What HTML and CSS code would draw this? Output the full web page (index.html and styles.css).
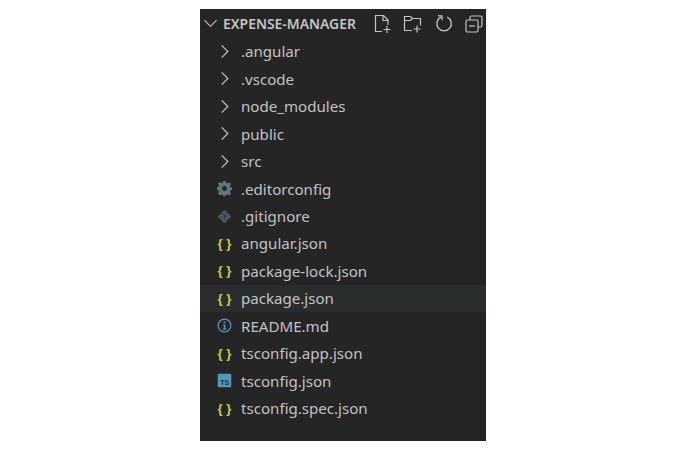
FILE: index.html
```html
<!DOCTYPE html>
<html lang="en">
<head>
<meta charset="utf-8">
<title>Explorer</title>
<link rel="stylesheet" href="styles.css">
</head>
<body>
<main class="panel">
  <header class="head">
    <svg class="head-chev" viewBox="0 0 16 16"><path d="M1.500 4.500 8 11l6.500-6.500" fill="none" stroke="currentColor" stroke-width="1.200"/></svg>
    <h1 class="title">EXPENSE-MANAGER</h1>
    <div class="actions">
      <svg class="act" viewBox="0 0 20 20" fill="none" stroke="currentColor" stroke-width="1.200"><path d="M9 17.500H2.500V1.500h8l4.500 4.500v5"/><path d="M10 1.500v5h5"/><path d="M14 12v7M10.500 15.500h7"/></svg>
      <svg class="act" viewBox="0 0 20 20" fill="none" stroke="currentColor" stroke-width="1.200"><path d="M9 16.500H1.500V2.500h6l2 2h8v7"/><path d="M1.500 6.500h6l2-2"/><path d="M14 11.500v7M10.500 15h7"/></svg>
      <svg class="act" viewBox="0 0 20 20" fill="none" stroke="currentColor" stroke-width="1.300"><path d="M7 3.200a7.200 7.200 0 1 0 6.200 0"/><path d="M4 2h4v4.200" transform="translate(0 -.2)"/></svg>
      <svg class="act" viewBox="0 0 20 20" fill="none" stroke="currentColor" stroke-width="1.200"><rect x="2" y="6" width="12" height="12" rx="1.500"/><path d="M6 6V3.500A1.500 1.500 0 0 1 7.500 2h9A1.500 1.500 0 0 1 18 3.500v8a1.500 1.500 0 0 1-1.500 1.500H14"/><path d="M5 12h6"/></svg>
    </div>
  </header>
  <ul class="tree">
    <li class="row"><svg class="ico chev" viewBox="0 0 16 16"><path d="M5 1.500 11.500 8 5 14.500" fill="none" stroke="currentColor" stroke-width="1.300"/></svg><span>.angular</span></li>
    <li class="row"><svg class="ico chev" viewBox="0 0 16 16"><path d="M5 1.500 11.500 8 5 14.500" fill="none" stroke="currentColor" stroke-width="1.300"/></svg><span>.vscode</span></li>
    <li class="row"><svg class="ico chev" viewBox="0 0 16 16"><path d="M5 1.500 11.500 8 5 14.500" fill="none" stroke="currentColor" stroke-width="1.300"/></svg><span>node_modules</span></li>
    <li class="row"><svg class="ico chev" viewBox="0 0 16 16"><path d="M5 1.500 11.500 8 5 14.500" fill="none" stroke="currentColor" stroke-width="1.300"/></svg><span>public</span></li>
    <li class="row"><svg class="ico chev" viewBox="0 0 16 16"><path d="M5 1.500 11.500 8 5 14.500" fill="none" stroke="currentColor" stroke-width="1.300"/></svg><span>src</span></li>
    <li class="row">
      <svg class="ico" viewBox="0 0 16 16"><path fill="#5f7780" d="M6.600 0h2.800l.4 2.200 1.300.5 1.900-1.300 2 2-1.300 1.900.5 1.300 2.200.4v2.800l-2.200.4-.5 1.300 1.300 1.900-2 2-1.900-1.300-1.300.5-.4 2.200H6.600l-.4-2.200-1.300-.5L3 15.400l-2-2 1.300-1.900-.5-1.300L-.4 9.400V6.600l2.200-.4.500-1.300L1 3l2-2 1.900 1.300 1.300-.5z"/><circle cx="8" cy="8" r="2.600" fill="#252526"/></svg>
      <span>.editorconfig</span>
    </li>
    <li class="row">
      <svg class="ico" viewBox="0 0 16 16"><path fill="#46595f" d="M8 .8 15.200 8 8 15.200 .8 8z"/><path fill="#252526" d="M6.300 4.600h1.300v1.300H6.300zM8.400 6.800h1.300v1.300H8.400zM7.400 6.200h.6v5h-.6z"/></svg>
      <span>.gitignore</span>
    </li>
    <li class="row"><svg class="ico" viewBox="0 0 16 16"><text x="8" y="13" text-anchor="middle" class="json-text">{ }</text></svg><span>angular.json</span></li>
    <li class="row"><svg class="ico" viewBox="0 0 16 16"><text x="8" y="13" text-anchor="middle" class="json-text">{ }</text></svg><span>package-lock.json</span></li>
    <li class="row row-hover"><svg class="ico" viewBox="0 0 16 16"><text x="8" y="13" text-anchor="middle" class="json-text">{ }</text></svg><span>package.json</span></li>
    <li class="row">
      <svg class="ico" viewBox="0 0 16 16"><circle cx="8" cy="8" r="6.800" fill="none" stroke="#519aba" stroke-width="1.300"/><path fill="#519aba" d="M7 3.600h2v1.900H7zM6.300 6.800h2.600v4.400h1v1.200H6.200v-1.200h1.100V8h-1z"/></svg>
      <span>README.md</span>
    </li>
    <li class="row"><svg class="ico" viewBox="0 0 16 16"><text x="8" y="13" text-anchor="middle" class="json-text">{ }</text></svg><span>tsconfig.app.json</span></li>
    <li class="row">
      <svg class="ico" viewBox="0 0 16 16"><rect x=".8" y=".8" width="14.400" height="14.400" rx="1" fill="#519aba"/><text x="8.200" y="13.200" text-anchor="middle" class="ts-text">TS</text></svg>
      <span>tsconfig.json</span>
    </li>
    <li class="row"><svg class="ico" viewBox="0 0 16 16"><text x="8" y="13" text-anchor="middle" class="json-text">{ }</text></svg><span>tsconfig.spec.json</span></li>
  </ul>
</main>
</body>
</html>
```
FILE: styles.css
```css
html, body {
  margin: 0;
  padding: 0;
  background: #ffffff;
}
body {
  width: 700px;
  height: 450px;
  overflow: hidden;
  display: flex;
  justify-content: flex-start;
  padding: 9px 0 0 200px;
  box-sizing: border-box;
  font-family: "Noto Sans", "Open Sans", sans-serif;
}
.panel {
  width: 286px;
  height: 432px;
  background: #252526;
  color: #c2c2c2;
}
.head {
  height: 28.600px;
  display: flex;
  align-items: center;
  padding: 1px 2px 0 3px;
  box-sizing: border-box;
  color: #c4c4c4;
}
.head-chev {
  width: 15px;
  height: 15px;
  flex: none;
  margin-right: 5px;
}
.title {
  margin: 0;
  font-size: 13.900px;
  font-weight: 600;
  white-space: nowrap;
}
.actions {
  margin-left: auto;
  display: flex;
  gap: 10.300px;
  align-items: center;
}
.act {
  width: 20px;
  height: 20px;
}
.tree {
  list-style: none;
  margin: 0;
  padding: 0;
}
.row {
  height: 27.460px;
  display: flex;
  align-items: center;
  padding-left: 17px;
  font-size: 15.100px;
  white-space: nowrap;
}
.row-hover {
  background: #2a2d2e;
}
.ico {
  width: 15px;
  height: 15px;
  flex: none;
  margin-right: 9px;
}
.chev {
  color: #c2c2c2;
}
.json-text {
  font-family: "Liberation Sans", sans-serif;
  font-size: 14px;
  font-weight: 700;
  fill: #cbcb41;
}
.ts-text {
  font-family: "Liberation Sans", sans-serif;
  font-size: 7.500px;
  font-weight: 700;
  fill: #252526;
}
```
